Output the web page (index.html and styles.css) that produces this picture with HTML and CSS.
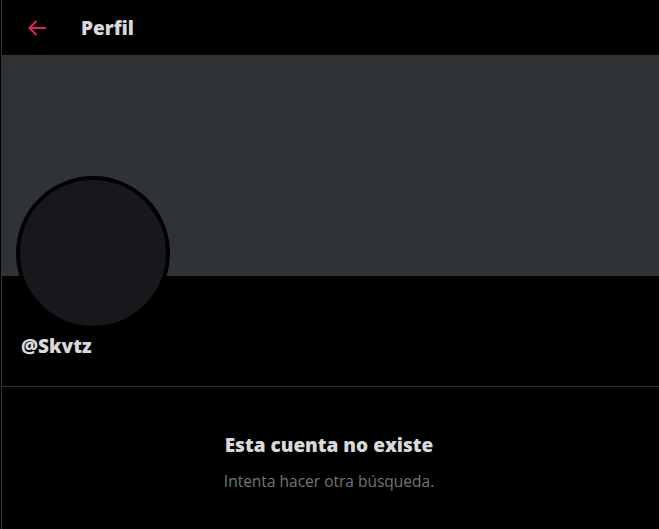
FILE: index.html
```html
<!doctype html>
<html>
<head>
  <link rel="stylesheet" href="styles.css">
</head>
<body>
  <div id="profile">
    <div class="topbar">
      <span class="back">
        <svg viewBox="0 0 20 20" width="20" height="20"><path d="M19 10H2.5M9.5 3L2.5 10L9.5 17"/></svg>
      </span>
      <h2>Perfil</h2>
    </div>
    <div class="banner"></div>
    <div class="info">
      <div class="avatar"></div>
      <div class="handle">@Skvtz</div>
    </div>
    <div class="empty">
      <div class="empty-title">Esta cuenta no existe</div>
      <div class="empty-sub">Intenta hacer otra búsqueda.</div>
    </div>
  </div>
</body>
</html>
```
FILE: styles.css
```css
body {
  margin: 0;
  background-color: black;
  font-family: "Open Sans", "Liberation Sans", sans-serif;
}
#profile {
  margin-left: 1px;
  border-left: 1px solid #2f3336;
  height: 529px;
}
.topbar {
  height: 55px;
  display: flex;
  align-items: center;
  padding-left: 25px;
}
.back svg {
  display: block;
  fill: none;
  stroke: #e0245e;
  stroke-width: 2;
}
.topbar h2 {
  margin: 0 0 0 34px;
  color: #d9d9d9;
  font-size: 19px;
  font-weight: 800;
}
.banner {
  height: 221px;
  background-color: #2f3336;
}
.info {
  position: relative;
  height: 110px;
  border-bottom: 1px solid #2f3336;
  padding-left: 19px;
}
.avatar {
  position: absolute;
  left: 14px;
  top: -100px;
  width: 146px;
  height: 146px;
  border-radius: 50%;
  border: 4px solid black;
  background-color: #16181c;
}
.handle {
  padding-top: 57px;
  color: #d9d9d9;
  font-size: 19px;
  font-weight: 800;
}
.empty {
  text-align: center;
  padding-top: 45px;
  padding-right: 3px;
}
.empty-title {
  color: #d9d9d9;
  font-size: 19px;
  font-weight: 800;
}
.empty-sub {
  margin-top: 12px;
  color: #6e767d;
  font-size: 15.5px;
}
```
